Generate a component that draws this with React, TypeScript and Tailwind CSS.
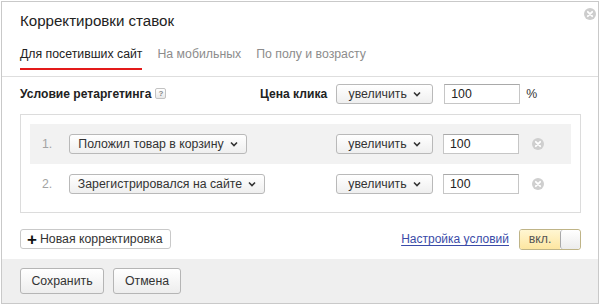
import React from 'react'

const Chevron = () => (
  <svg width="8" height="6" viewBox="0 0 8 6" className="ml-[6px] shrink-0">
    <polyline points="1,1.5 4,4.5 7,1.5" fill="none" stroke="#333" strokeWidth="1.6" />
  </svg>
)

const CloseIcon = ({ color = '#c8c8c8' }: { color?: string }) => (
  <svg width="12" height="12" viewBox="0 0 12 12">
    <circle cx="6" cy="6" r="6" fill={color} />
    <path d="M3.8 3.8 L8.2 8.2 M8.2 3.8 L3.8 8.2" stroke="#fff" strokeWidth="1.8" strokeLinecap="round" />
  </svg>
)

function Select({ label, w }: { label: string; w: string }) {
  return (
    <button className={`${w} h-[20px] flex items-center justify-center whitespace-nowrap rounded-[3px] border border-[#b9b9b9] bg-gradient-to-b from-white to-[#efefef] text-[12.3px] text-[#333] leading-none`}>
      <span>{label}</span>
      <Chevron />
    </button>
  )
}

function Input() {
  return (
    <div className="w-[76px] h-[20px] border border-[#c6c6c6] border-t-[#a9a9a9] bg-white pl-[6px] flex items-center text-[12.3px] text-[#222]">
      100
    </div>
  )
}

function Row({ n, label, w }: { n: string; label: string; w: string }) {
  return (
    <div className={`h-[40px] flex items-center pl-[12px] ${n === '1.' ? 'bg-[#f2f2f2]' : ''}`}>
      <span className="w-[27px] text-[12.3px] text-[#a3a3a3]">{n}</span>
      <Select label={label} w={w} />
      <div className="ml-auto flex items-center pr-[27px]">
        <Select label="увеличить" w="w-[97px]" />
        <div className="ml-[10px]"><Input /></div>
        <div className="ml-[13px]"><CloseIcon color="#cfcfcf" /></div>
      </div>
    </div>
  )
}

export default function App() {
  return (
    <div className="w-[600px] h-[305px] p-px bg-white" style={{ fontFamily: '"Liberation Sans", Arial, sans-serif' }}>
      <div className="w-[598px] h-[303px] border border-[#c9c9c9] flex flex-col">
        <div className="relative px-[18px] border-b border-[#dedede]">
          <h1 className="mt-[9px] h-[20px] leading-[20px] text-[15.1px] text-[#222]">Корректировки ставок</h1>
          <div className="absolute right-[2px] top-[6px]"><CloseIcon color="#cdcdcd" /></div>
          <div className="mt-[15px] mb-[6px] flex gap-[15px] text-[12.3px] leading-[16px] whitespace-nowrap">
            <div className="pb-[6px] border-b-2 border-[#e31a1a] text-[#222]">Для посетивших сайт</div>
            <div className="text-[#8c8c8c]">На мобильных</div>
            <div className="text-[#8c8c8c]">По полу и возрасту</div>
          </div>
        </div>

        <div className="px-[18px]">
          <div className="mt-[7px] h-[20px] flex items-center text-[12.1px] whitespace-nowrap">
            <div className="w-[240px] flex items-center">
              <span className="font-bold text-[#222]">Условие ретаргетинга</span>
              <span className="ml-[4px] w-[11px] h-[11px] rounded-[2px] border border-[#c2c2c2] bg-gradient-to-b from-white to-[#e9e9e9] text-[8px] leading-[9px] text-center text-[#888] font-bold">?</span>
            </div>
            <span className="font-bold text-[#222]">Цена клика</span>
            <div className="ml-[9px]"><Select label="увеличить" w="w-[97px]" /></div>
            <div className="ml-[11px]"><Input /></div>
            <span className="ml-[6px] text-[12.3px] text-[#333]">%</span>
          </div>

          <div className="mt-[10px] w-[561px] border border-[#dcdcdc] p-[9px] pb-[8px]">
            <Row n="1." label="Положил товар в корзину" w="w-[178px]" />
            <Row n="2." label="Зарегистрировался на сайте" w="w-[196px]" />
          </div>

          <div className="mt-[16px] w-[561px] h-[20px] flex items-center whitespace-nowrap">
            <button className="w-[151px] h-[20px] flex items-center pl-[6px] rounded-[3px] border border-[#c9c9c9] bg-white text-[12.3px] text-[#333]">
              <span className="text-[17px] leading-none font-bold mr-[3px] text-[#111]">+</span>
              Новая корректировка
            </button>
            <a className="ml-auto text-[12px] text-[#3a4ba8] underline underline-offset-2">Настройка условий</a>
            <div className="ml-[10px] w-[62px] h-[21px] flex rounded-[3px] border border-[#bfb487] overflow-hidden">
              <div className="w-[40px] flex items-center justify-center bg-gradient-to-b from-[#fff6d2] to-[#fde6a0] text-[12.3px] text-[#555]">вкл.</div>
              <div className="flex-1 border-l border-[#a9a9a9] rounded-[3px] bg-gradient-to-b from-white to-[#ececec]"></div>
            </div>
          </div>
        </div>

        <div className="mt-auto h-[44px] bg-[#efefef] px-[18px] pt-[9px] flex gap-[9px]">
          <button className="w-[84px] h-[26px] rounded-[3px] border border-[#b5b5b5] bg-gradient-to-b from-white to-[#ededed] text-[12.3px] text-[#333]">Сохранить</button>
          <button className="w-[68px] h-[26px] rounded-[3px] border border-[#b5b5b5] bg-gradient-to-b from-white to-[#ededed] text-[12.3px] text-[#333]">Отмена</button>
        </div>
      </div>
    </div>
  )
}
